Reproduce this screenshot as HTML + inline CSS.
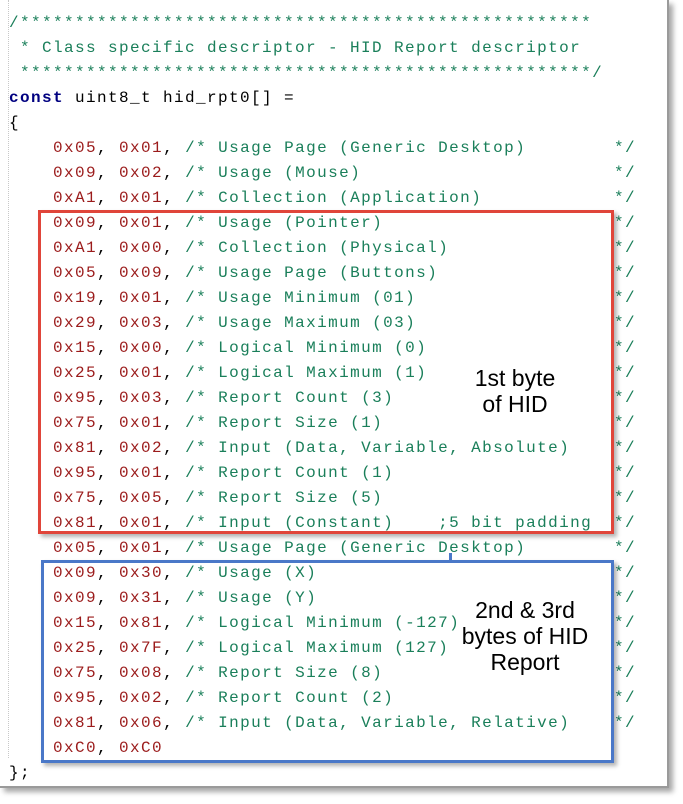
<!DOCTYPE html>
<html><head><meta charset="utf-8"><style>
html,body{margin:0;padding:0;background:#fff;width:683px;height:804px;overflow:hidden;position:relative}
.panel{position:absolute;left:0;top:0;width:667px;height:786px;background:#fff;border-right:2px solid #9a9a9a;border-bottom:2px solid #9a9a9a;box-shadow:4px 4px 5px rgba(0,0,0,0.35)}
.dots{position:absolute;left:8px;top:0;height:758px;border-left:1px dotted #c8c8c8}
.code{position:absolute;left:9px;top:11px;font-family:"Liberation Mono",monospace;font-size:16px;letter-spacing:1.4px}
.l{height:25px;line-height:25px;position:relative;white-space:pre}
.c{color:#1a7f5a}
.h{color:#9b1b1b}
.k{color:#000080;font-weight:bold}
.t{color:#000}
.e{position:absolute;left:605px;top:0;color:#1a7f5a}
.box{position:absolute;box-sizing:border-box}
.red{left:38px;top:210px;width:576px;height:324px;border:3px solid #e0453a;box-shadow:3px 3px 4px rgba(0,0,0,0.3)}
.blue{left:41px;top:560px;width:573px;height:203px;border:3px solid #4a78c8;box-shadow:3px 3px 4px rgba(0,0,0,0.3)}
.tick{position:absolute;left:449px;top:553px;width:3px;height:8px;background:#4a78c8}
.lab{position:absolute;font-family:"Liberation Sans",sans-serif;font-size:23px;color:#000;text-align:center;line-height:26px}
</style></head><body>
<div class="panel"></div>
<div class="dots"></div>
<div class="code"><div class="l c">/****************************************************</div><div class="l c"> * Class specific descriptor - HID Report descriptor</div><div class="l c"> ****************************************************/</div><div class="l t"><span class="k">const</span> uint8_t hid_rpt0[] =</div><div class="l t">{</div><div class="l">    <span class="h">0x05</span>, <span class="h">0x01</span>, <span class="c">/* Usage Page (Generic Desktop)</span><span class="e">*/</span></div><div class="l">    <span class="h">0x09</span>, <span class="h">0x02</span>, <span class="c">/* Usage (Mouse)</span><span class="e">*/</span></div><div class="l">    <span class="h">0xA1</span>, <span class="h">0x01</span>, <span class="c">/* Collection (Application)</span><span class="e">*/</span></div><div class="l">    <span class="h">0x09</span>, <span class="h">0x01</span>, <span class="c">/* Usage (Pointer)</span><span class="e">*/</span></div><div class="l">    <span class="h">0xA1</span>, <span class="h">0x00</span>, <span class="c">/* Collection (Physical)</span><span class="e">*/</span></div><div class="l">    <span class="h">0x05</span>, <span class="h">0x09</span>, <span class="c">/* Usage Page (Buttons)</span><span class="e">*/</span></div><div class="l">    <span class="h">0x19</span>, <span class="h">0x01</span>, <span class="c">/* Usage Minimum (01)</span><span class="e">*/</span></div><div class="l">    <span class="h">0x29</span>, <span class="h">0x03</span>, <span class="c">/* Usage Maximum (03)</span><span class="e">*/</span></div><div class="l">    <span class="h">0x15</span>, <span class="h">0x00</span>, <span class="c">/* Logical Minimum (0)</span><span class="e">*/</span></div><div class="l">    <span class="h">0x25</span>, <span class="h">0x01</span>, <span class="c">/* Logical Maximum (1)</span><span class="e">*/</span></div><div class="l">    <span class="h">0x95</span>, <span class="h">0x03</span>, <span class="c">/* Report Count (3)</span><span class="e">*/</span></div><div class="l">    <span class="h">0x75</span>, <span class="h">0x01</span>, <span class="c">/* Report Size (1)</span><span class="e">*/</span></div><div class="l">    <span class="h">0x81</span>, <span class="h">0x02</span>, <span class="c">/* Input (Data, Variable, Absolute)</span><span class="e">*/</span></div><div class="l">    <span class="h">0x95</span>, <span class="h">0x01</span>, <span class="c">/* Report Count (1)</span><span class="e">*/</span></div><div class="l">    <span class="h">0x75</span>, <span class="h">0x05</span>, <span class="c">/* Report Size (5)</span><span class="e">*/</span></div><div class="l">    <span class="h">0x81</span>, <span class="h">0x01</span>, <span class="c">/* Input (Constant)    ;5 bit padding</span><span class="e">*/</span></div><div class="l">    <span class="h">0x05</span>, <span class="h">0x01</span>, <span class="c">/* Usage Page (Generic Desktop)</span><span class="e">*/</span></div><div class="l">    <span class="h">0x09</span>, <span class="h">0x30</span>, <span class="c">/* Usage (X)</span><span class="e">*/</span></div><div class="l">    <span class="h">0x09</span>, <span class="h">0x31</span>, <span class="c">/* Usage (Y)</span><span class="e">*/</span></div><div class="l">    <span class="h">0x15</span>, <span class="h">0x81</span>, <span class="c">/* Logical Minimum (-127)</span><span class="e">*/</span></div><div class="l">    <span class="h">0x25</span>, <span class="h">0x7F</span>, <span class="c">/* Logical Maximum (127)</span><span class="e">*/</span></div><div class="l">    <span class="h">0x75</span>, <span class="h">0x08</span>, <span class="c">/* Report Size (8)</span><span class="e">*/</span></div><div class="l">    <span class="h">0x95</span>, <span class="h">0x02</span>, <span class="c">/* Report Count (2)</span><span class="e">*/</span></div><div class="l">    <span class="h">0x81</span>, <span class="h">0x06</span>, <span class="c">/* Input (Data, Variable, Relative)</span><span class="e">*/</span></div><div class="l">    <span class="h">0xC0</span>, <span class="h">0xC0</span></div><div class="l t">};</div></div>
<div class="box red"></div>
<div class="tick"></div>
<div class="box blue"></div>
<div class="lab" style="left:450px;top:365px;width:130px">1st byte<br>of HID</div>
<div class="lab" style="left:445px;top:597px;width:160px">2nd &amp; 3rd<br>bytes of HID<br>Report</div>
</body></html>
